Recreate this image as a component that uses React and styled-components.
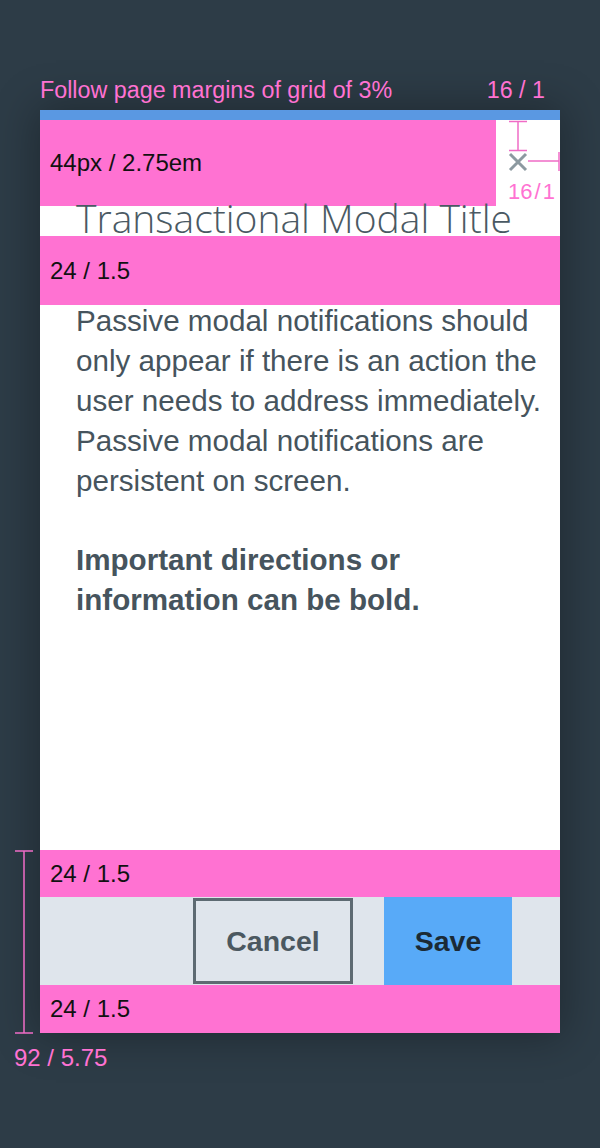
import React from 'react';
import styled, { createGlobalStyle } from 'styled-components';

const GlobalStyle = createGlobalStyle`
  html, body {
    margin: 0;
    padding: 0;
    background: #2d3c47;
  }
  body {
    font-family: 'Liberation Sans', Arial, sans-serif;
  }
`;

const PINK = '#ff72d2';
const MARK = '#f06cc6';

const Page = styled.div`
  min-height: 1148px;
  box-sizing: border-box;
  padding: 78px 40px 0;
`;

const Caption = styled.div`
  display: flex;
  justify-content: space-between;
  padding-right: 15px;
  margin-bottom: 8px;
`;

const Note = styled.div`
  color: ${PINK};
  font-size: 23.3px;
  line-height: 24px;
`;

const Modal = styled.div`
  width: 520px;
  background: #fff;
  display: flex;
  flex-direction: column;
  box-shadow: 0 0 40px 4px rgba(0, 0, 0, 0.3);
`;

const Accent = styled.div`
  height: 10px;
  background: #5a98e2;
`;

const Header = styled.div`
  display: flex;
  height: 86px;
`;

const Spacer = styled.div`
  height: ${(p) => p.$h}px;
  width: ${(p) => (p.$w ? `${p.$w}px` : 'auto')};
  flex: none;
  background: ${PINK};
  color: #111;
  font-size: 24px;
  display: flex;
  align-items: center;
  padding-left: 10px;
  box-sizing: border-box;
`;

const CloseCell = styled.div`
  position: relative;
  flex: 1;
`;

const CloseButton = styled.button`
  position: absolute;
  left: 12px;
  top: 32px;
  width: 20px;
  height: 20px;
  padding: 0;
  border: 0;
  background: none;
  display: flex;
`;

const Marks = styled.svg`
  position: absolute;
  left: 0;
  top: 0;
  pointer-events: none;
`;

const MarkLabel = styled.div`
  position: absolute;
  left: 12px;
  top: 61px;
  color: ${PINK};
  font-size: 22px;
  line-height: 22px;
  word-spacing: -4px;
  white-space: nowrap;
`;

const Title = styled.h1`
  margin: 0;
  height: 30px;
  padding-left: 36px;
  font-family: 'Open Sans', 'Liberation Sans', sans-serif;
  font-size: 39px;
  line-height: 24px;
  font-weight: 300;
  color: #4a5963;
  white-space: nowrap;
`;

const Body = styled.div`
  height: 545px;
  padding-left: 36px;
  box-sizing: border-box;
`;

const Copy = styled.p`
  margin: -4px 0 39px;
  font-size: 29.6px;
  line-height: 40px;
  font-weight: ${(p) => (p.$bold ? 700 : 400)};
  color: #46545d;
  & + & {
    margin-top: 0;
  }
`;

const Bottom = styled.div`
  position: relative;
  display: flex;
  flex-direction: column;
`;

const Actions = styled.div`
  height: 88px;
  background: #dfe5ec;
  display: flex;
  justify-content: flex-end;
  align-items: center;
  gap: 31px;
  padding-right: 48px;
`;

const ActionButton = styled.button`
  font-family: 'Liberation Sans', Arial, sans-serif;
  font-size: 28.5px;
  font-weight: 700;
  box-sizing: border-box;
  width: ${(p) => (p.$primary ? 128 : 160)}px;
  height: ${(p) => (p.$primary ? 88 : 86)}px;
  border: ${(p) => (p.$primary ? '0' : '3px solid #5d6a72')};
  background: ${(p) => (p.$primary ? '#58aaf8' : 'transparent')};
  color: ${(p) => (p.$primary ? '#1b2a35' : '#4b5860')};
  padding: 0;
  cursor: pointer;
`;

const Bracket = styled.svg`
  position: absolute;
  left: -26px;
  top: 0;
`;

const BracketLabel = styled.div`
  position: absolute;
  left: -26px;
  top: 196px;
  color: ${PINK};
  font-size: 24px;
  line-height: 24px;
  white-space: nowrap;
`;

export default function App() {
  return (
    <Page>
      <GlobalStyle />
      <Caption>
        <Note>Follow page margins of grid of 3%</Note>
        <Note>16 / 1</Note>
      </Caption>
      <Modal>
        <Accent />
        <Header>
          <Spacer $h={86} $w={456}>44px / 2.75em</Spacer>
          <CloseCell>
            <Marks width="64" height="60" viewBox="0 0 64 60">
              <g stroke={MARK} strokeWidth="1.5" fill="none">
                <path d="M13 1.5h18M22 1.5v29M13 30.5h18" />
                <path d="M32 41h31M63 32v19" />
              </g>
            </Marks>
            <CloseButton aria-label="Close">
              <svg width="20" height="20" viewBox="0 0 20 20">
                <path d="M2 2l16 16M18 2L2 18" stroke="#8c99a0" strokeWidth="3" />
              </svg>
            </CloseButton>
            <MarkLabel>16 / 1</MarkLabel>
          </CloseCell>
        </Header>
        <Title>Transactional Modal Title</Title>
        <Spacer $h={69}>24 / 1.5</Spacer>
        <Body>
          <Copy>
            Passive modal notifications should only appear if there is an action the user
            needs to address immediately. Passive modal notifications are persistent on
            screen.
          </Copy>
          <Copy $bold>Important directions or information can be bold.</Copy>
        </Body>
        <Bottom>
          <Spacer $h={47}>24 / 1.5</Spacer>
          <Actions>
            <ActionButton>Cancel</ActionButton>
            <ActionButton $primary>Save</ActionButton>
          </Actions>
          <Spacer $h={48}>24 / 1.5</Spacer>
          <Bracket width="20" height="184" viewBox="0 0 20 184">
            <path d="M1 1h18M10 1v182M1 183h18" stroke={MARK} strokeWidth="1.5" fill="none" />
          </Bracket>
          <BracketLabel>92 / 5.75</BracketLabel>
        </Bottom>
      </Modal>
    </Page>
  );
}
